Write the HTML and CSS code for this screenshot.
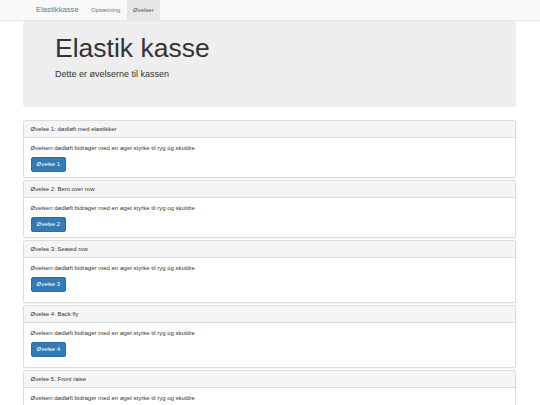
FILE: index.html
```html
<!DOCTYPE html>
<html lang="da">
<head>
  <meta charset="UTF-8" />
  <meta name="viewport" content="width=device-width, initial-scale=1.0" />
  <title>Elastikkasse</title>
  <link rel="stylesheet" href="styles.css">
</head>
<body>
  <nav class="navbar">
    <div class="nav-inner">
      <a class="brand" href="#">Elastikkasse</a>
      <a class="nav-link" href="#">Opsætning</a>
      <a class="nav-link active" href="#">Øvelser</a>
    </div>
  </nav>

  <div class="container">
    <div class="jumbotron">
      <h1>Elastik kasse</h1>
      <p>Dette er øvelserne til kassen</p>
    </div>

    <div class="panels">
      <div class="panel">
        <div class="panel-heading">Øvelse 1: dødløft med elastikker</div>
        <div class="panel-body">
          <p>Øvelsen dødløft bidrager med en øget styrke til ryg og skuldre</p>
          <button class="btn">Øvelse 1</button>
        </div>
      </div>
      <div class="panel">
        <div class="panel-heading">Øvelse 2: Bent over row</div>
        <div class="panel-body">
          <p>Øvelsen dødløft bidrager med en øget styrke til ryg og skuldre</p>
          <button class="btn">Øvelse 2</button>
        </div>
      </div>
      <div class="panel">
        <div class="panel-heading">Øvelse 3: Seated row</div>
        <div class="panel-body tall">
          <p>Øvelsen dødløft bidrager med en øget styrke til ryg og skuldre</p>
          <button class="btn">Øvelse 3</button>
        </div>
      </div>
      <div class="panel">
        <div class="panel-heading">Øvelse 4: Back fly</div>
        <div class="panel-body tall">
          <p>Øvelsen dødløft bidrager med en øget styrke til ryg og skuldre</p>
          <button class="btn">Øvelse 4</button>
        </div>
      </div>
      <div class="panel">
        <div class="panel-heading">Øvelse 5: Front raise</div>
        <div class="panel-body">
          <p>Øvelsen dødløft bidrager med en øget styrke til ryg og skuldre</p>
          <button class="btn">Øvelse 5</button>
        </div>
      </div>
    </div>
  </div>
</body>
</html>
```

FILE: styles.css
```css
body {
  margin: 0;
  font-family: "Liberation Sans", Arial, sans-serif;
  font-size: 6px;
  color: #333;
  background-color: #fff;
}
.navbar {
  height: 20px;
  background-color: #f8f8f8;
  border-bottom: 1px solid #e7e7e7;
}
.nav-inner {
  display: flex;
  height: 20px;
  padding-left: 30px;
}
.brand {
  padding: 0 6px;
  font-size: 7.7px;
  line-height: 20px;
  color: #777;
  text-decoration: none;
}
.nav-link {
  padding: 0 6.3px;
  font-size: 6px;
  line-height: 20px;
  color: #777;
  text-decoration: none;
}
.nav-link.active {
  background-color: #e7e7e7;
  color: #555;
}
.container {
  margin: 0 24px 0 23px;
}
.jumbotron {
  background-color: #eee;
  border-radius: 3px;
  padding: 13px 32px 26px;
}
.jumbotron h1 {
  margin: 0;
  font-size: 26.5px;
  font-weight: 500;
  line-height: 29px;
}
.jumbotron p {
  margin: 5px 0 0;
  font-size: 9px;
  line-height: 13px;
}
.panels {
  margin-top: 13px;
}
.panel {
  background-color: #fff;
  border: 1px solid #ddd;
  border-radius: 2px;
  margin-bottom: 2.5px;
  box-shadow: 0 1px 1px rgba(0, 0, 0, 0.05);
}
.panel-heading {
  height: 16px;
  line-height: 16px;
  padding: 0 6.5px;
  background-color: #f5f5f5;
  border-bottom: 1px solid #ddd;
}
.panel-body {
  padding: 6px 6.5px 5px;
}
.panel-body.tall {
  padding-bottom: 10px;
}
.panel-body p {
  margin: 0 0 4px;
  line-height: 8.5px;
}
.btn {
  display: block;
  height: 15px;
  padding: 0 5px;
  font-family: inherit;
  font-size: 6px;
  line-height: 13px;
  color: #fff;
  background-color: #337ab7;
  border: 1px solid #2e6da4;
  border-radius: 2px;
}
```
